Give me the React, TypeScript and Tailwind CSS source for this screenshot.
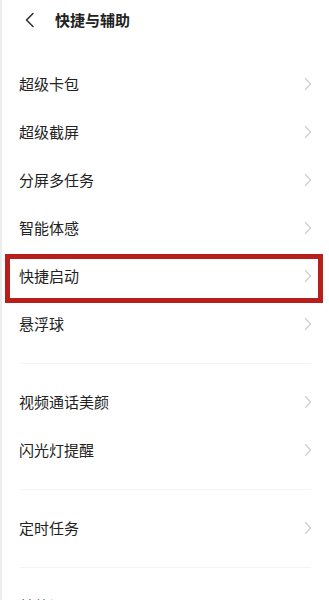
import React from 'react';

const groups: string[][] = [
  ['超级卡包', '超级截屏', '分屏多任务', '智能体感', '快捷启动', '悬浮球'],
  ['视频通话美颜', '闪光灯提醒'],
  ['定时任务'],
  ['其他设置'],
];

const Chevron = () => (
  <svg width="8" height="14" viewBox="0 0 8 14" fill="none">
    <path d="M1.5 1.5L6.5 7L1.5 12.5" stroke="#cfcfcf" strokeWidth="1.3" strokeLinecap="round" strokeLinejoin="round" />
  </svg>
);

const Row: React.FC<{ label: string; highlight?: boolean }> = ({ label, highlight }) => (
  <div className="relative flex h-12 items-center justify-between pl-[17px] pr-[17px]">
    <span className="text-[15px] text-[#222]">{label}</span>
    <Chevron />
    {highlight && (
      <div className="pointer-events-none absolute left-[3px] right-[6px] top-[2px] bottom-[-3px] border-[5px] border-[#b81e1a]" />
    )}
  </div>
);

export default function App() {
  return (
    <div
      className="h-[600px] w-[329px] overflow-hidden border-l-2 border-[#ececec] bg-white"
      style={{ fontFamily: '"Noto Sans CJK SC", "Noto Sans", sans-serif' }}
    >
      <div className="flex h-10 items-center pl-[22px]">
        <svg width="12" height="16" viewBox="0 0 12 16" fill="none">
          <path d="M9 1.5L2.5 8L9 14.5" stroke="#333" strokeWidth="1.6" strokeLinecap="round" strokeLinejoin="round" />
        </svg>
        <span className="ml-[19px] text-[15px] font-bold text-[#222]">快捷与辅助</span>
      </div>
      <div className="h-5" />
      {groups.map((g, gi) => (
        <div key={gi}>
          {gi > 0 && (
            <div className="flex h-[30px] items-center px-[18px]">
              <div className="h-px w-full bg-[#f4f4f4]" />
            </div>
          )}
          {g.map(label => (
            <Row key={label} label={label} highlight={label === '快捷启动'} />
          ))}
        </div>
      ))}
    </div>
  );
}
